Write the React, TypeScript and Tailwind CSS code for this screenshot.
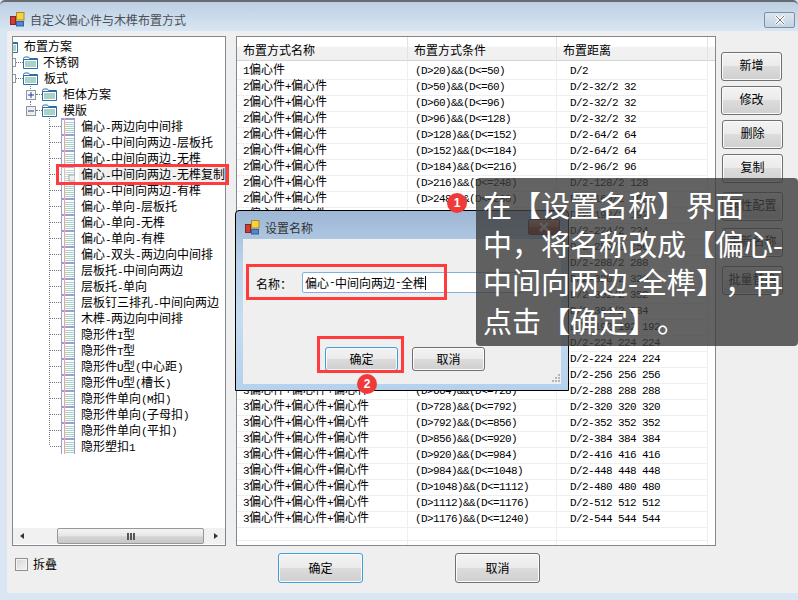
import React from 'react';

const CJK = '"Noto Sans CJK SC", "Noto Sans", sans-serif';

// latin runs in the reference are half-width (6px), cjk runs are 12px
const Mixed = ({ text }: { text: string }) => (
  <>
    {text.split(/([\x20-\x7e]+)/).map((part, i) =>
      /^[\x20-\x7e]+$/.test(part) ? (
        <span key={i} className="font-['Liberation_Mono',monospace] text-[11px] tracking-[-0.6px]">{part}</span>
      ) : (
        <span key={i}>{part}</span>
      )
    )}
  </>
);

const bounds = [20, 50, 60, 96, 128, 152, 184, 216, 248, 280, 312, 344, 376, 408, 440, 472, 504, 536, 568, 600, 664, 728, 792, 856, 920, 984, 1048, 1112, 1176, 1240];
const dists = [
  'D/2', 'D/2-32/2 32', 'D/2-32/2 32', 'D/2-32/2 32', 'D/2-64/2 64', 'D/2-64/2 64', 'D/2-96/2 96', 'D/2-128/2 128',
  'D/2-160/2 160', 'D/2-192/2 192', 'D/2-224/2 224', 'D/2-256/2 256', 'D/2-288/2 288', 'D/2-320/2 320', 'D/2-352/2 352',
  'D/2-384/2 384', 'D/2-192 192 192', 'D/2-224 224 224', 'D/2-224 224 224', 'D/2-256 256 256', 'D/2-288 288 288',
  'D/2-320 320 320', 'D/2-352 352 352', 'D/2-384 384 384', 'D/2-416 416 416', 'D/2-448 448 448', 'D/2-480 480 480',
  'D/2-512 512 512', 'D/2-544 544 544'
];
const rows = dists.map((dist, i) => ({
  name: i === 0 ? '1偏心件' : i < 16 ? '2偏心件+偏心件' : '3偏心件+偏心件+偏心件',
  cond: `(D>${bounds[i]})&&(D<=${bounds[i + 1]})`,
  dist
}));

const leaves = [
  '偏心-两边向中间排', '偏心-中间向两边-层板托', '偏心-中间向两边-无榫', '偏心-中间向两边-无榫复制', '偏心-中间向两边-有榫',
  '偏心-单向-层板托', '偏心-单向-无榫', '偏心-单向-有榫', '偏心-双头-两边向中间排', '层板托-中间向两边', '层板托-单向',
  '层板钉三排孔-中间向两边', '木榫-两边向中间排', '隐形件I型', '隐形件T型', '隐形件U型(中心距)', '隐形件U型(槽长)',
  '隐形件单向(M扣)', '隐形件单向(子母扣)', '隐形件单向(平扣)', '隐形塑扣1'
];

const sideButtons = [
  { label: '新增', cls: 'mt-[16px] ml-0' },
  { label: '修改', cls: 'mt-[5px] ml-0' },
  { label: '删除', cls: 'mt-[5px] ml-px' },
  { label: '复制', cls: 'mt-[5px] ml-px' },
  { label: '属性配置', cls: 'mt-[9px] ml-px' },
  { label: '更新名称', cls: 'mt-[7px] ml-px' },
  { label: '批量替换', cls: 'mt-[9px] ml-px' }
];

const AppIcon = () => (
  <svg width="15" height="15" viewBox="0 0 15 15" className="shrink-0">
    <rect x="6.5" y="0.5" width="7.5" height="7.5" fill="#f7d23e" stroke="#a8892a" />
    <rect x="0.5" y="4.5" width="5" height="8" fill="#d63a30" stroke="#7d2a26" />
    <rect x="6.5" y="9.5" width="7" height="4.5" fill="#4f86d6" stroke="#35609c" />
  </svg>
);

const Folder = () => (
  <svg width="15" height="13" viewBox="0 0 15 13" className="shrink-0">
    <path d="M0.5 2.5 L1.5 1 H5.5 L6.5 2.5 H14.5 V12.5 H0.5 Z" fill="#ffffff" stroke="#2f6ea5" />
    <rect x="1" y="3" width="13" height="1" fill="#2f6ea5" />
    <rect x="2" y="5" width="11" height="6" fill="#a9d2c9" />
  </svg>
);

const LeafIcon = ({ dim = false }: { dim?: boolean }) => (
  <svg width="14" height="16" viewBox="0 0 14 16" className="shrink-0" opacity={dim ? 0.75 : 1}>
    <rect x="0" y="0" width="14" height="16" fill="#ffffff" />
    {[4, 6, 8, 10, 12, 14].map(y => (
      <rect key={y} x="3" y={y} width="10" height="1" fill="#a5d3c4" />
    ))}
    <rect x="0" y="0" width="14" height="2" fill="#9c9cd2" />
    <rect x="0" y="0" width="1" height="16" fill="#9c9cd2" />
    <rect x="13" y="0" width="1" height="16" fill="#9c9cd2" />
    <rect x="3" y="0" width="1" height="16" fill="#f5a0a0" />
    {dim && <rect x="8" y="9" width="6" height="6" fill="#ececec" stroke="#8a8a8a" strokeWidth="1" />}
  </svg>
);

const Connector = ({ last }: { last: boolean }) => (
  <svg width="12" height="16" viewBox="0 0 12 16" className="shrink-0">
    <path d={last ? 'M0.5 0 V8' : 'M0.5 0 V16'} stroke="#7a7a7a" strokeDasharray="1 1" fill="none" />
    <path d="M1 8.5 H12" stroke="#7a7a7a" strokeDasharray="1 1" fill="none" />
  </svg>
);

const Expander = ({ open }: { open: boolean }) => (
  <svg width="10" height="16" viewBox="0 0 10 16" className="shrink-0">
    <path d={open ? 'M4.5 0 V4' : 'M4.5 0 V4 M4.5 13 V16'} stroke="#7a7a7a" strokeDasharray="1 1" fill="none" />
    <rect x="0.5" y="4.5" width="9" height="9" fill={open ? '#eeeeee' : '#f4f6fa'} stroke="#8a98a8" />
    <path d="M2 9 H8" stroke="#2a3f80" />
    {!open && <path d="M5 6 V12" stroke="#2a3f80" />}
  </svg>
);

const Tree = () => (
  <div className="w-[214px] h-[510px] border border-[#828790] bg-white flex flex-col text-xs text-black">
    <div className="flex-1 overflow-hidden pt-px">
      <div className="h-4 flex items-center">
        <div className="w-[5px] overflow-hidden flex justify-end shrink-0">
          <Folder />
        </div>
        <span className="ml-[6px]">布置方案</span>
      </div>
      <div className="h-4 flex items-center">
        <div className="w-[3px] h-[9px] border-y border-r border-[#8a98a8] shrink-0" />
        <div className="w-[7px] border-t border-dotted border-[#7a7a7a]" />
        <Folder />
        <span className="ml-[5px]">不锈钢</span>
      </div>
      <div className="h-4 flex items-center">
        <div className="w-[3px] h-[9px] border-y border-r border-[#8a98a8] shrink-0" />
        <div className="w-[7px] border-t border-dotted border-[#7a7a7a]" />
        <Folder />
        <span className="ml-[6px]">板式</span>
      </div>
      <div className="h-4 flex items-center pl-[13px]">
        <Expander open={false} />
        <div className="w-[6px] border-t border-dotted border-[#7a7a7a]" />
        <Folder />
        <span className="ml-[6px]">柜体方案</span>
      </div>
      <div className="h-4 flex items-center pl-[13px]">
        <Expander open />
        <div className="w-[6px] border-t border-dotted border-[#7a7a7a]" />
        <Folder />
        <span className="ml-[6px]">模版</span>
      </div>
      {leaves.map((leaf, i) => (
        <div key={leaf} className="h-4 flex items-center pl-[36px]">
          <Connector last={i === leaves.length - 1} />
          <LeafIcon dim={i === 3} />
          <span className={`ml-[4px] pl-[2px] pt-[2px] leading-[14px] whitespace-nowrap ${i === 3 ? 'bg-[#f0f0f0] flex-1 mr-0' : ''}`}>
            <Mixed text={leaf} />
          </span>
        </div>
      ))}
    </div>
    <div className="h-[16px] mb-px flex items-center bg-[#f1f1f1]">
      <svg width="44" height="16" viewBox="0 0 44 16" className="shrink-0">
        <path d="M11 5 V11 L7 8 Z" fill="#333333" />
      </svg>
      <div className="w-[147px] h-[16px] rounded-[2px] border border-[#979797] bg-[linear-gradient(#f4f4f4_0%,#e6e6e6_50%,#d4d4d4_55%,#c8c8c8_100%)] flex items-center justify-center gap-px">
        <span className="w-[2px] h-[7px] bg-[#555555]" />
        <span className="w-[2px] h-[7px] bg-[#555555]" />
        <span className="w-[2px] h-[7px] bg-[#555555]" />
      </div>
      <svg width="21" height="16" viewBox="0 0 21 16" className="shrink-0">
        <path d="M10 5 V11 L14 8 Z" fill="#333333" />
      </svg>
    </div>
  </div>
);

const Grid = () => (
  <div className="w-[480px] h-[510px] border border-[#828790] bg-white text-xs text-black flex flex-col">
    <div className="h-[24px] shrink-0 grid grid-cols-[171px_149px_151px_7px] border-b border-[#d5d5d5] bg-[linear-gradient(#ffffff_0%,#ffffff_40%,#f2f2f2_45%,#f0f0f0_100%)]">
      <div className="border-r border-[#e3e3e3] pl-[6px] leading-[25px]">布置方式名称</div>
      <div className="border-r border-[#e3e3e3] pl-[6px] leading-[25px]">布置方式条件</div>
      <div className="border-r border-[#e3e3e3] pl-[6px] leading-[25px]">布置距离</div>
      <div />
    </div>
    <div className="flex-1 overflow-hidden">
      {rows.map(row => (
        <div key={row.cond} className="h-4 grid grid-cols-[171px_149px_151px_7px] leading-[15px] whitespace-nowrap">
          <div className="border-r border-b border-[#efefef] pl-[6px]"><Mixed text={row.name} /></div>
          <div className="border-r border-b border-[#efefef] pl-[7px]"><Mixed text={row.cond} /></div>
          <div className="border-r border-b border-[#efefef] pl-[13px]"><Mixed text={row.dist} /></div>
          <div />
        </div>
      ))}
      <div className="h-4 grid grid-cols-[171px_149px_151px_7px]">
        <div className="border-r border-b border-[#efefef]" />
        <div className="border-r border-b border-[#efefef]" />
        <div className="border-r border-b border-[#efefef]" />
        <div />
      </div>
      <div className="h-[4px] grid grid-cols-[171px_149px_151px_7px]">
        <div className="border-r border-[#efefef]" />
        <div className="border-r border-[#efefef]" />
        <div className="border-r border-[#efefef]" />
        <div />
      </div>
    </div>
  </div>
);

const WinButton = ({ label, className = '', focused = false }: { label: string; className?: string; focused?: boolean }) => (
  <button className={`${className} rounded-[3px] border text-xs text-black shadow-[inset_0_0_0_1px_#fbfbfb] bg-[linear-gradient(#f3f3f3_0%,#ebebeb_48%,#dcdcdc_50%,#cfcfcf_100%)] ${focused ? 'border-[#3c9fd5]' : 'border-[#707070]'}`}>
    {label}
  </button>
);

const Dialog = () => (
  <div className="absolute left-[235px] top-[210px] w-[334px] h-[181px] border border-black rounded-t-[4px] flex flex-col bg-[#b8d2ec] bg-[linear-gradient(#9db7d5_0%,#bcd3ea_30%,#c6dcf0_60%,#b5d1ec_100%)]">
    <div className="h-[28px] shrink-0 relative flex items-center pl-[9px] pt-[5px] gap-[5px] text-xs text-[#333333]">
      <AppIcon />
      <span>设置名称</span>
      <div className="absolute right-[8px] top-[8px] w-[32px] h-[16px] rounded-[2px] border border-[#4a2a22] bg-[linear-gradient(#c9897d_0%,#b2574a_50%,#9a2f22_55%,#8c2a20_100%)] flex items-center justify-center">
        <svg width="12" height="10" viewBox="0 0 12 10">
          <path d="M2 1 L10 9 M10 1 L2 9" stroke="#dcdcdc" strokeWidth="2.5" />
        </svg>
      </div>
    </div>
    <div className="flex-1 mx-[7px] mb-[6px] bg-[#efefef] relative text-xs text-black flex flex-col">
      <div className="flex items-center pl-[13px] mt-[33px]">
        <span className="w-[46px] pt-[2px]">名称：</span>
        <div className="w-[221px] h-[21px] bg-white border border-[#7fb2e0] rounded-[2px] flex items-center pl-[2px]">
          <Mixed text="偏心-中间向两边-全榫" />
          <span className="w-px h-[14px] bg-black" />
        </div>
      </div>
      <div className="flex pl-[82px] gap-[14px] mt-[54px]">
        <WinButton label="确定" focused className="w-[73px] h-[24px]" />
        <WinButton label="取消" className="w-[73px] h-[24px]" />
      </div>
      <svg width="12" height="12" viewBox="0 0 12 12" className="absolute right-0 bottom-0">
        <path d="M9 2h2v2H9z M6 5h2v2H6z M9 5h2v2H9z M3 8h2v2H3z M6 8h2v2H6z M9 8h2v2H9z" fill="#b5b5b5" />
      </svg>
    </div>
  </div>
);

const Badge = ({ n, className }: { n: number; className: string }) => (
  <div className={`${className} absolute w-5 h-5 rounded-full bg-[#f03a3a] text-white text-xs flex items-center justify-center font-['Liberation_Sans',sans-serif] font-bold`}>
    {n}
  </div>
);

export default function App() {
  return (
    <div className="relative w-[798px] h-[600px] overflow-hidden flex flex-col bg-[#dae6f3]" style={{ fontFamily: CJK }}>
      <div className="h-[31px] shrink-0 flex items-center pl-[10px] gap-[5px] pt-[6px] border-t-2 border-[#666c72] rounded-t-[5px] bg-[linear-gradient(#bccfe2_0%,#d9e6f3_100%)] text-xs text-[#4a4f55] relative">
        <AppIcon />
        <span>自定义偏心件与木榫布置方式</span>
        <div className="absolute right-[3px] top-[10px] w-[31px] h-[16px] rounded-[2px] border border-[#7d8fa3] bg-[linear-gradient(#dbe5ef_0%,#c5d3e2_100%)] flex items-center justify-center">
          <svg width="12" height="10" viewBox="0 0 12 10">
            <path d="M2 1 L10 9 M10 1 L2 9" stroke="#ffffff" strokeWidth="3" />
            <path d="M2 1 L10 9 M10 1 L2 9" stroke="#6d747c" strokeWidth="1" />
          </svg>
        </div>
      </div>
      <div className="flex-1 ml-[7px] mb-[7px] bg-[#efefef] flex flex-col">
        <div className="flex pt-[5px] pl-[5px]">
          <Tree />
          <div className="w-[10px]" />
          <Grid />
          <div className="flex flex-col ml-[5px]">
            {sideButtons.map(b => (
              <WinButton key={b.label} label={b.label} className={`${b.cls} w-[61px] h-[29px] pb-[4px]`} />
            ))}
          </div>
        </div>
        <div className="flex-1 relative flex items-start pt-[7px] pl-[8px] text-xs text-black">
          <div className="flex items-center h-[30px] w-[263px] -mt-px">
            <div className="w-[13px] h-[13px] border border-[#8e8f8f] bg-[linear-gradient(135deg,#d5d5d5_0%,#f5f5f5_100%)] shadow-[inset_0_0_0_1px_#f4f4f4] -mt-[6px]" />
            <span className="ml-[5px] -mt-[6px]">拆叠</span>
          </div>
          <WinButton label="确定" focused className="w-[85px] h-[30px]" />
          <WinButton label="取消" className="w-[85px] h-[30px] ml-[92px]" />
        </div>
      </div>

      <Dialog />

      <div className="absolute left-[56px] top-[164px] w-[173px] h-[21px] border-[3px] border-[#ff3b3b]" />
      <div className="absolute left-[246px] top-[264px] w-[201px] h-[36px] border-[3px] border-[#ff3b3b]" />
      <div className="absolute left-[317px] top-[336px] w-[87px] h-[37px] border-[3px] border-[#ff3b3b]" />
      <Badge n={2} className="left-[357px] top-[374px]" />

      <div className="absolute left-[476px] top-[178px] w-[322px] h-[168px] rounded-[4px] bg-[#3c3c3c]/80 text-white text-[29px] leading-[38.5px] pl-[7px] pt-[7px] whitespace-nowrap [text-spacing-trim:space-all]">
        <div>在【设置名称】界面</div>
        <div>中，将名称改成【偏心-</div>
        <div>中间向两边-全榫】，再</div>
        <div>点击【确定】。</div>
      </div>
      <Badge n={1} className="left-[447px] top-[193px]" />
    </div>
  );
}
